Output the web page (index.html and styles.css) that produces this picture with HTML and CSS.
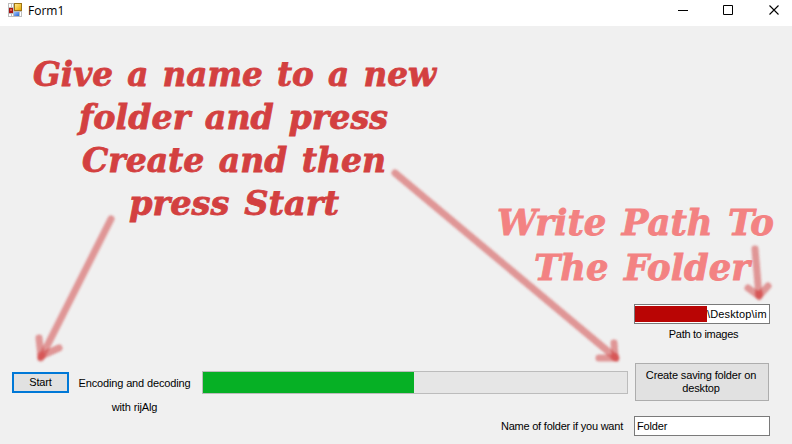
FILE: index.html
```html
<!DOCTYPE html>
<html lang="en">
<head>
<meta charset="utf-8">
<title>Form1</title>
<link rel="stylesheet" href="styles.css">
</head>
<body>
<div class="window">
  <header class="titlebar">
    <svg class="app-icon" width="14" height="14" viewBox="0 0 14 14">
      <defs>
        <linearGradient id="gold" x2="1" y2="1"><stop offset="0" stop-color="#ffe98e"/><stop offset="1" stop-color="#e8a900"/></linearGradient>
        <linearGradient id="blue" x2="1" y2="1"><stop offset="0" stop-color="#9dc4ff"/><stop offset="1" stop-color="#2867d2"/></linearGradient>
      </defs>
      <path fill="#bdbdbd" d="M0 0h14v14H0z"/>
      <path fill="#fff" d="M1 1h2v3H1zM4 1h1v3H4zM1 11h2v2H1zM4 11h1v2H4zM12 9h1v4h-1z"/>
      <path fill="#9d7414" d="M6 0h8v8H6z"/><path fill="url(#gold)" d="M7 1h6v6H7z"/>
      <path fill="#a81414" d="M1 5h4v5H1z"/><path fill="#e0584a" d="M2 6h2v2H2z"/>
      <path fill="url(#blue)" d="M6 9h5v4H6z"/>
    </svg>
    <span class="caption">Form1</span>
    <svg class="controls" width="104" height="12" viewBox="0 0 104 12" fill="none" stroke="#000">
      <path d="M0 5.500h10M45.500 .5h9v9h-9z"/>
      <path d="M91.500 .5l9 9M100.500 .5l-9 9" stroke-width="1.100"/>
    </svg>
  </header>
  <main class="form">
    <section class="left">
      <div class="encode-row">
        <button class="btn start">Start</button>
        <div class="encode-label">Encoding and decoding<br>with rijAlg</div>
        <div class="progress"><div class="bar"></div></div>
      </div>
      <div class="name-label">Name of folder if you want</div>
    </section>
    <section class="right">
      <div class="input path"><span class="redacted"></span><span>\Desktop\im</span></div>
      <div class="path-label">Path to images</div>
      <button class="btn create">Create saving folder on<br>desktop</button>
      <div class="input folder">Folder</div>
    </section>
  </main>
  <svg class="notes" width="792" height="444" viewBox="0 0 792 444">
    <defs>
      <filter id="soft" x="-20%" y="-20%" width="140%" height="140%"><feGaussianBlur stdDeviation="1"/></filter>
    </defs>
    <g class="note strong">
      <text x="33" y="86" textLength="403" lengthAdjust="spacingAndGlyphs">Give a name to a new</text>
      <text x="79" y="129" textLength="309" lengthAdjust="spacingAndGlyphs">folder and press</text>
      <text x="82" y="172" textLength="304" lengthAdjust="spacingAndGlyphs">Create and then</text>
      <text x="129" y="215" textLength="210" lengthAdjust="spacingAndGlyphs">press Start</text>
    </g>
    <g class="note light">
      <text x="497" y="235" textLength="277" lengthAdjust="spacingAndGlyphs">Write Path To</text>
      <text x="534" y="280" textLength="216" lengthAdjust="spacingAndGlyphs">The Folder</text>
    </g>
    <g class="arrows" filter="url(#soft)">
      <path d="M111 219L41 358"/><path d="M39 338L41 356L59 348"/>
      <path d="M395 173L616 358"/><path d="M614 343L615 358L599 358"/>
      <path d="M755 249L759 296"/><path d="M748 288L759 296L768 286"/>
      <g class="tips"><circle cx="41" cy="356" r="4"/><circle cx="615" cy="357" r="4"/><circle cx="759" cy="294" r="4"/></g>
    </g>
  </svg>
</div>
</body>
</html>
```
FILE: styles.css
```css
* { box-sizing: border-box; }
body { margin: 0; }
.window {
  position: relative;
  width: 792px;
  height: 444px;
  overflow: hidden;
  display: flex;
  flex-direction: column;
  background: #f0f0f0;
  color: #000;
  font: 11px/13px "Liberation Sans", Arial, sans-serif;
  letter-spacing: -.15px;
}
.titlebar {
  height: 26px;
  flex: none;
  display: flex;
  align-items: flex-start;
  padding: 3px 10px 0 8px;
  background: #fff;
}
.caption {
  margin-left: 6px;
  font: 12px/16px "Open Sans", "Noto Sans", sans-serif;
  letter-spacing: 0;
}
.controls { margin: 2px 0 0 auto; }
.form {
  flex: 1;
  display: grid;
  grid-template-columns: 616px 136px;
  column-gap: 6px;
  padding-left: 12px;
}
.left { padding-top: 345px; }
.encode-row { display: flex; height: 49px; }
.btn {
  padding: 0;
  border: 1px solid #adadad;
  background: #e1e1e1;
  color: #000;
  font: inherit;
  letter-spacing: inherit;
  text-align: center;
}
.start {
  width: 57px;
  height: 21px;
  margin-top: 1px;
  border: 2px solid #0078d7;
}
.encode-label {
  width: 113px;
  margin-left: 9px;
  line-height: 24px;
  text-align: center;
  white-space: nowrap;
}
.progress {
  width: 426px;
  height: 23px;
  margin-left: auto;
  border: 1px solid #bcbcbc;
  background: #e6e6e6;
}
.bar { width: 211px; height: 100%; background: #06b025; }
.name-label { padding-right: 5px; text-align: right; letter-spacing: -.22px; }
.right { padding-top: 278px; }
.input {
  height: 20px;
  display: flex;
  align-items: center;
  border: 1px solid #7a7a7a;
  background: #fff;
  overflow: hidden;
  white-space: nowrap;
}
.path { letter-spacing: .15px; }
.redacted { width: 72px; height: 16px; background: #b90504; flex: none; }
.path-label { margin: 4px 0 22px; padding-left: 3px; text-align: center; letter-spacing: -.28px; }
.create { display: block; width: 134px; height: 38px; margin: 0 0 15px 1px; padding-right: 2px; }
.folder { padding-left: 2px; }
.notes { position: absolute; left: 0; top: 0; pointer-events: none; letter-spacing: 0; }
.note {
  font: italic bold 34px "DejaVu Serif", serif;
  word-spacing: 3px;
  stroke-width: .8px;
}
.strong { fill: #d34040; stroke: #d34040; }
.light { fill: #f38282; stroke: #f38282; font-size: 35px; }
.arrows path {
  fill: none;
  stroke: #d03c3c;
  stroke-opacity: .5;
  stroke-width: 7;
  stroke-linecap: round;
}
.tips { fill: #d53030; fill-opacity: .3; }
```
